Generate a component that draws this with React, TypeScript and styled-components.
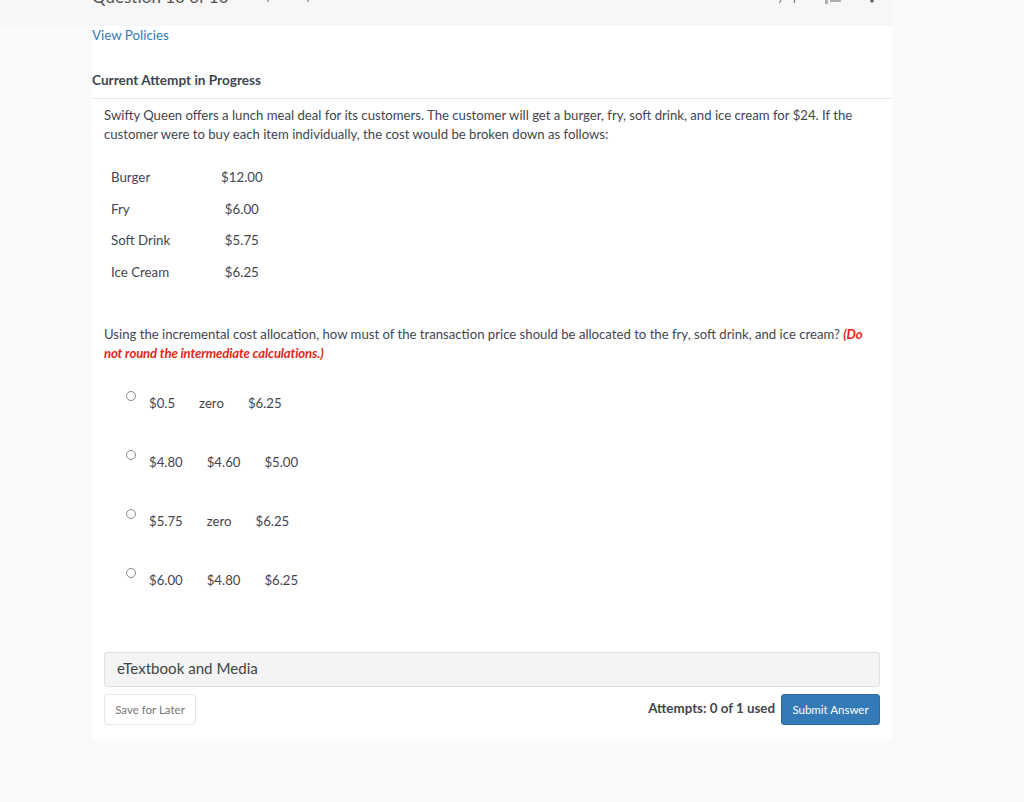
import React from 'react';
import styled, { createGlobalStyle } from 'styled-components';

const GlobalStyle = createGlobalStyle`
  html, body {
    margin: 0;
    padding: 0;
    background: #fafafa;
    font-family: Lato, 'Liberation Sans', sans-serif;
    color: #3f4650;
  }
`;

const Page = styled.div`
  width: 1024px;
  height: 802px;
  overflow: hidden;
`;

const TopBar = styled.div`
  height: 26px;
  width: 892px;
  box-sizing: border-box;
  padding-left: 92px;
  background: #f7f7f7;
  overflow: hidden;
  display: flex;
  align-items: flex-start;
`;

const QuestionCount = styled.div`
  font-size: 17px;
  line-height: 20px;
  margin-top: -13px;
  color: #555;
  white-space: nowrap;
`;

const TopMarks = styled.svg`
  margin-left: auto;
  flex: none;
`;

const Panel = styled.div`
  width: 800px;
  height: 713px;
  margin-left: 92px;
  background: #fff;
  display: flex;
  flex-direction: column;
`;

const PolicyLink = styled.a`
  font-size: 13.35px;
  line-height: 18px;
  color: #337ab7;
`;

const AttemptTitle = styled.div`
  margin-top: 27px;
  padding-bottom: 8px;
  font-size: 13.6px;
  line-height: 19px;
  font-weight: 700;
  color: #3f4650;
  border-bottom: 1px solid #e8e8e8;
`;

const Body = styled.div`
  padding: 7px 12px 0;
  flex: 1;
  display: flex;
  flex-direction: column;
`;

const Paragraph = styled.p<{ $gap?: number }>`
  margin: ${(p) => p.$gap ?? 0}px 0 0;
  font-size: 13.15px;
  line-height: 19px;
`;

const Emphasis = styled.em`
  color: #e4261c;
  font-weight: 700;
  letter-spacing: -0.13px;
`;

const PriceTable = styled.table`
  border-collapse: collapse;
  margin: 17px 0 0;
  align-self: flex-start;
  font-size: 13.3px;
`;

const PriceRow = styled.tr`
  height: 32px;

  &:nth-child(3) {
    height: 30px;
  }

  &:nth-child(4) {
    height: 33px;
  }
`;

const Cell = styled.td<{ $amount?: boolean }>`
  padding: 0 7px;
  box-sizing: border-box;
  min-width: ${(p) => (p.$amount ? '54px' : '110px')};
  text-align: ${(p) => (p.$amount ? 'center' : 'left')};
`;

const Options = styled.div`
  margin: 27px 0 0 22px;
  display: flex;
  flex-direction: column;
  gap: 35.9px;
`;

const Option = styled.label`
  display: flex;
  align-items: flex-start;
  height: 23px;
`;

const Radio = styled.span`
  width: 10px;
  height: 10px;
  margin-top: 1px;
  border: 1px solid #8a8a8a;
  border-radius: 50%;
  box-sizing: border-box;
  background: #fff;
`;

const Values = styled.span`
  margin: 5px 0 0 13px;
  display: flex;
  gap: 24px;
  font-size: 13.2px;
  line-height: 17px;
`;

const MediaBar = styled.div`
  margin-top: 62px;
  height: 35px;
  box-sizing: border-box;
  padding: 0 0 2px 12px;
  display: flex;
  align-items: center;
  background: #f4f4f4;
  border: 1px solid #e0e0e0;
  border-radius: 3px;
  font-size: 15.1px;
  color: #444;
`;

const Footer = styled.div`
  margin-top: 7px;
  display: flex;
  align-items: center;
  justify-content: space-between;
`;

const SaveButton = styled.button`
  width: 92px;
  height: 31px;
  padding: 0;
  background: #fff;
  border: 1px solid #e6e6e6;
  border-radius: 3px;
  font: 400 11.5px Lato, sans-serif;
  color: #777;
`;

const SubmitGroup = styled.div`
  display: flex;
  align-items: center;
  gap: 6px;
`;

const Attempts = styled.span`
  font-size: 13.35px;
  font-weight: 700;
  margin-top: -3px;
`;

const SubmitButton = styled.button`
  width: 99px;
  height: 31px;
  padding: 0;
  background: #337ab7;
  border: 1px solid #2e6da4;
  border-radius: 3px;
  font: 400 11.5px Lato, sans-serif;
  color: #fff;
`;

const prices = [
  ['Burger', '$12.00'],
  ['Fry', '$6.00'],
  ['Soft Drink', '$5.75'],
  ['Ice Cream', '$6.25'],
];

const choices = [
  ['$0.5', 'zero', '$6.25'],
  ['$4.80', '$4.60', '$5.00'],
  ['$5.75', 'zero', '$6.25'],
  ['$6.00', '$4.80', '$6.25'],
];

export default function App() {
  return (
    <Page>
      <GlobalStyle />
      <TopBar>
        <QuestionCount>Question 10 of 10</QuestionCount>
        {/* bottoms of the header marks that are scrolled off the top */}
        <TopMarks width="663" height="26" viewBox="0 0 663 26" fill="none" stroke="#666">
          <path d="M39.5 0l-.8 2M79.5 0l-.8 2M552 0l-1.5 3M565.5 0v3" strokeWidth="1" />
          <path d="M596 1h3M596 3h3M601 1h11" strokeWidth="1" />
          <circle cx="643" cy="1" r="1.6" fill="#555" stroke="none" />
        </TopMarks>
      </TopBar>
      <Panel>
        <PolicyLink>View Policies</PolicyLink>
        <AttemptTitle>Current Attempt in Progress</AttemptTitle>
        <Body>
          <Paragraph>
            Swifty Queen offers a lunch meal deal for its customers. The customer will get a burger, fry, soft drink, and ice cream for $24. If the customer were to buy each item individually, the cost would be broken down as follows:
          </Paragraph>
          <PriceTable>
            <tbody>
              {prices.map(([item, price]) => (
                <PriceRow key={item}>
                  <Cell>{item}</Cell>
                  <Cell $amount>{price}</Cell>
                </PriceRow>
              ))}
            </tbody>
          </PriceTable>
          <Paragraph $gap={37}>
            Using the incremental cost allocation, how must of the transaction price should be allocated to the fry, soft drink, and ice cream?{' '}
            <Emphasis>(Do not round the intermediate calculations.)</Emphasis>
          </Paragraph>
          <Options>
            {choices.map((values) => (
              <Option key={values.join()}>
                <Radio />
                <Values>
                  {values.map((v, i) => (
                    <span key={i}>{v}</span>
                  ))}
                </Values>
              </Option>
            ))}
          </Options>
          <MediaBar>eTextbook and Media</MediaBar>
          <Footer>
            <SaveButton>Save for Later</SaveButton>
            <SubmitGroup>
              <Attempts>Attempts: 0 of 1 used</Attempts>
              <SubmitButton>Submit Answer</SubmitButton>
            </SubmitGroup>
          </Footer>
        </Body>
      </Panel>
    </Page>
  );
}
